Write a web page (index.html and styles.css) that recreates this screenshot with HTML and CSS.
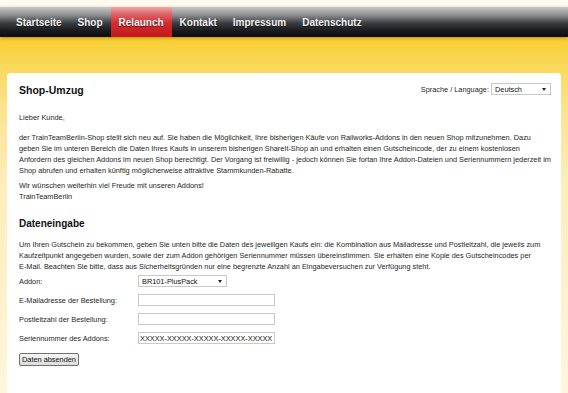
FILE: index.html
```html
<!DOCTYPE html>
<html lang="de">
<head>
  <meta charset="UTF-8">
  <meta name="viewport" content="width=device-width, initial-scale=1.0">
  <title>Shop-Umzug - TrainTeamBerlin</title>
  <link rel="stylesheet" href="styles.css">
</head>
<body>
<div class="topstrip"></div>

<!-- Hauptnavigation -->
<ul class="navbar">
  <li><a href="#">Startseite</a></li>
  <li><a href="#">Shop</a></li>
  <li class="active"><a href="#">Relaunch</a></li>
  <li><a href="#">Kontakt</a></li>
  <li><a href="#">Impressum</a></li>
  <li><a href="#">Datenschutz</a></li>
</ul>

<div class="stage">
  <div class="card">
    <div class="card-head">
      <h1>Shop-Umzug</h1>
      <div class="lang">
        <label for="lang">Sprache / Language:</label>
        <span class="select-wrap lang-select">
          <select id="lang">
            <option selected>Deutsch</option>
            <option>English</option>
          </select>
        </span>
      </div>
    </div>

    <p class="first">Lieber Kunde,</p>
    <p class="intro">der TrainTeamBerlin-Shop stellt sich neu auf. Sie haben die Möglichkeit, Ihre bisherigen Käufe von Railworks-Addons in den neuen Shop mitzunehmen. Dazu<br>
      geben Sie im unteren Bereich die Daten Ihres Kaufs in unserem bisherigen ShareIt-Shop an und erhalten einen Gutscheincode, der zu einem kostenlosen<br>
      Anfordern des gleichen Addons im neuen Shop berechtigt. Der Vorgang ist freiwillig - jedoch können Sie fortan Ihre Addon-Dateien und Seriennummern jederzeit im<br>
      Shop abrufen und erhalten künftig möglicherweise attraktive Stammkunden-Rabatte.</p>
    <p>Wir wünschen weiterhin viel Freude mit unseren Addons!<br>TrainTeamBerlin</p>

    <h2>Dateneingabe</h2>
    <p class="hint">Um Ihren Gutschein zu bekommen, geben Sie unten bitte die Daten des jeweiligen Kaufs ein: die Kombination aus Mailadresse und Postleitzahl, die jeweils zum<br>
      Kaufzeitpunkt angegeben wurden, sowie der zum Addon gehörigen Seriennummer müssen übereinstimmen. Sie erhalten eine Kopie des Gutscheincodes per<br>
      E-Mail. Beachten Sie bitte, dass aus Sicherheitsgründen nur eine begrenzte Anzahl an Eingabeversuchen zur Verfügung steht.</p>

    <form class="voucher-form" action="#">
      <div class="row">
        <label for="addon">Addon:</label>
        <span class="select-wrap addon-select">
          <select id="addon" name="addon">
            <option selected>BR101-PlusPack</option>
          </select>
        </span>
      </div>
      <div class="row">
        <label for="mail">E-Mailadresse der Bestellung:</label>
        <input type="text" id="mail" name="mail">
      </div>
      <div class="row">
        <label for="zip">Postleitzahl der Bestellung:</label>
        <input type="text" id="zip" name="zip">
      </div>
      <div class="row">
        <label for="serial">Seriennummer des Addons:</label>
        <input type="text" id="serial" name="serial" value="XXXXX-XXXXX-XXXXX-XXXXX-XXXXX">
      </div>
      <button type="submit">Daten absenden</button>
    </form>
  </div>
</div>
</body>
</html>
```

FILE: styles.css
```css
body {
    font-family: "Liberation Sans", Arial, sans-serif;
    margin: 0;
    padding: 0;
    background-color: #fff8e6;
    color: #222;
}
.topstrip {
    height: 7px;
    background-color: #fffaf0;
}
.navbar {
    list-style: none;
    margin: 0;
    padding: 0 0 0 8px;
    height: 30px;
    display: flex;
    background: linear-gradient(#c6c7c9 0, #8d8f92 8px, #3b3e42 16px, #17191b 24px, #0c0d0e 30px);
    box-shadow: 0 1px 3px rgba(150, 100, 0, 0.6);
    position: relative;
}
.navbar li a {
    display: block;
    height: 30px;
    line-height: 31px;
    padding: 0 8px;
    color: #f4f4f4;
    font-size: 10px;
    font-weight: bold;
    text-decoration: none;
    text-shadow: 0 1px 1px rgba(0, 0, 0, 0.6);
}
.navbar li.active a {
    background: linear-gradient(#eaa9aa 0, #e06467 7px, #d12d31 16px, #c4181d 30px);
}
.stage {
    background: linear-gradient(#f8cd2e 0, #f9d64f 20px, #fbe38c 70px, #fdedb8 140px, #fff6dc 356px);
    padding: 36px 7px 0;
}
.card {
    background-color: #fff;
    border-radius: 4px 4px 0 0;
    padding: 9px 12px 40px;
    min-height: 300px;
    font-size: 7.35px;
    line-height: 11px;
    color: #262626;
}
.card-head {
    display: flex;
    justify-content: space-between;
    align-items: flex-start;
}
h1, h2 {
    font-weight: bold;
    color: #111;
    margin: 0;
    line-height: 14px;
}
h1 {
    font-size: 10.5px;
    margin-top: 1px;
}
h2 {
    font-size: 10px;
    margin: 15px 0 8px;
}
p {
    margin: 0 0 9px;
    white-space: nowrap;
}
p.first {
    margin-top: 15px;
}
p.intro {
    margin-bottom: 4px;
}
p.hint {
    margin-bottom: 0;
}
.lang {
    display: flex;
    align-items: center;
    margin-top: 1px;
    margin-right: -2px;
}
.lang label {
    margin-right: 2px;
}
.select-wrap {
    position: relative;
    display: inline-block;
}
.select-wrap::after {
    content: "";
    position: absolute;
    right: 5px;
    top: 5px;
    border-left: 2.5px solid transparent;
    border-right: 2.5px solid transparent;
    border-top: 3px solid #222;
    pointer-events: none;
}
select, input {
    -webkit-appearance: none;
    appearance: none;
    font-family: "Liberation Sans", Arial, sans-serif;
    font-size: 7.35px;
    height: 12px;
    box-sizing: border-box;
    border: 1px solid #c9c9c9;
    background-color: #fff;
    color: #111;
    padding: 0 3px;
    margin: 0;
    border-radius: 0;
}
.lang-select select {
    width: 60px;
}
.addon-select select {
    width: 89px;
}
.voucher-form {
    margin-top: 3px;
}
.row {
    display: flex;
    align-items: center;
    height: 12px;
    margin-bottom: 7px;
}
.row label {
    width: 119px;
}
.row input {
    width: 137px;
    height: 12px;
    padding: 0 1px;
}
button {
    font-family: "Liberation Sans", Arial, sans-serif;
    font-size: 7.35px;
    height: 13px;
    padding: 0 2px;
    margin-top: 2px;
    border: 1px solid #6f6f6f;
    border-radius: 2px;
    background: linear-gradient(#f6f6f6, #dcdcdc);
    color: #111;
    cursor: pointer;
}
```
